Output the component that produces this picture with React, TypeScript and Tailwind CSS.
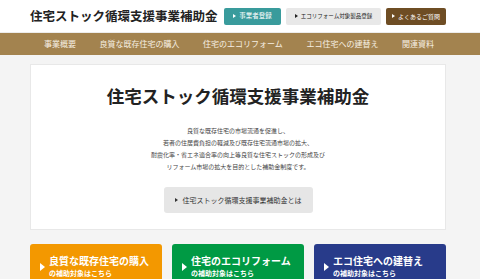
import React from 'react';

const Arrow: React.FC<{ className?: string }> = ({ className = '' }) => (
  <span className={`inline-block w-0 h-0 border-y-[2.5px] border-y-transparent border-l-[3px] ${className}`} />
);

const NAV_ITEMS = ['事業概要', '良質な既存住宅の購入', '住宅のエコリフォーム', 'エコ住宅への建替え', '関連資料'];

const TargetCard: React.FC<{ title: string, color: string }> = ({ title, color }) => (
  <div className={`${color} h-[50px] rounded-t-[3px] flex items-start pl-[10px] pt-[11px] text-white`}>
    <span className="w-0 h-0 border-y-[4px] border-y-transparent border-l-[5px] border-l-white mt-[8px] mr-[4px]" />
    <div className="flex flex-col">
      <span className="text-[10px] leading-[12px] font-bold">{title}</span>
      <span className="text-[7px] leading-[12px] font-bold">の補助対象はこちら</span>
    </div>
  </div>
);

const App: React.FC = () => {
  return (
    <div className="min-h-screen bg-[#f4f4f4] text-[#333] font-['Noto_Sans_CJK_JP','Noto_Sans',sans-serif]">
      <header className="bg-white h-[33px] border-b border-[#ececec]">
        <div className="ml-[30px] w-[416px] h-full flex items-center justify-between">
          <h1 className="shrink-0 whitespace-nowrap text-[12.5px] font-bold text-[#222] leading-none">住宅ストック循環支援事業補助金</h1>
          <div className="flex shrink-0 gap-[5px] items-center whitespace-nowrap">
            <a className="h-[17px] w-[57px] bg-[#399b9c] text-white rounded-[2px] flex items-center justify-center gap-[3px] text-[6.5px]">
              <Arrow className="border-l-white" />事業者登録
            </a>
            <a className="h-[17px] w-[95px] bg-[#e8e8e8] text-[#222] rounded-[2px] flex items-center justify-center gap-[3px] text-[5.5px]">
              <Arrow className="border-l-[#222]" />エコリフォーム対象製品登録
            </a>
            <a className="h-[17px] w-[60px] bg-[#6e4d24] text-white rounded-[2px] flex items-center justify-center gap-[3px] text-[6px]">
              <Arrow className="border-l-white" />よくあるご質問
            </a>
          </div>
        </div>
      </header>

      <nav className="bg-[#a3834f] h-[22px]">
        <ul className="ml-[44px] w-[390px] h-full flex items-center justify-between text-[8px] text-[#f6efe2]">
          {NAV_ITEMS.map(item => (
            <li key={item}>{item}</li>
          ))}
        </ul>
      </nav>

      <main className="ml-[30px] w-[416px] pt-[9px]">
        <section className="bg-white border border-[#e8e8e8] h-[166px] flex flex-col items-center pt-[21px]">
          <h2 className="text-[17.5px] leading-[20px] font-bold text-[#222]">住宅ストック循環支援事業補助金</h2>
          <div className="mt-[19px] text-[6px] leading-[12px] text-center text-[#444]">
            <p>良質な既存住宅の市場流通を促進し、</p>
            <p>若者の住居費負担の軽減及び既存住宅流通市場の拡大、</p>
            <p>耐震化率・省エネ適合率の向上等良質な住宅ストックの形成及び</p>
            <p>リフォーム市場の拡大を目的とした補助金制度です。</p>
          </div>
          <button className="mt-[14px] w-[149px] h-[26px] bg-[#e6e6e6] rounded-[3px] flex items-center justify-center gap-[5px] text-[7px] text-[#333]">
            <Arrow className="border-l-[#333]" />住宅ストック循環支援事業補助金とは
          </button>
        </section>

        <div className="grid grid-cols-3 gap-[10px] mt-[14px]">
          <TargetCard title="良質な既存住宅の購入" color="bg-[#f39800]" />
          <TargetCard title="住宅のエコリフォーム" color="bg-[#009a44]" />
          <TargetCard title="エコ住宅への建替え" color="bg-[#283b8a]" />
        </div>
      </main>
    </div>
  );
};

export default App;
